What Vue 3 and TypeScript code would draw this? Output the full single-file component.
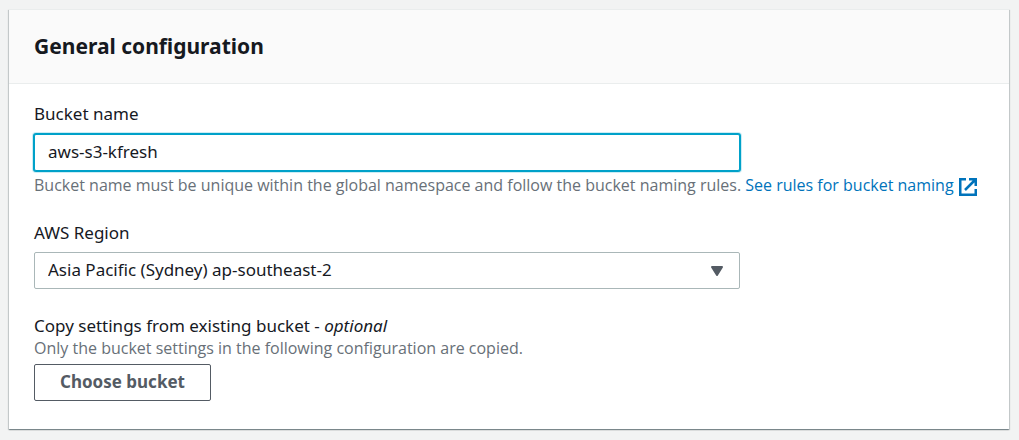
<script setup lang="ts">
import { ref } from 'vue'

interface Region {
  code: string
  label: string
}

const regions: Region[] = [
  { code: 'ap-southeast-2', label: 'Asia Pacific (Sydney) ap-southeast-2' },
]

const bucketName = ref<string>('aws-s3-kfresh')
const region = ref<string>('ap-southeast-2')
</script>

<template>
  <main class="page">
    <section class="panel" aria-labelledby="panel-title">
      <header class="panel-header">
        <h2 id="panel-title">General configuration</h2>
      </header>

      <form class="panel-body" @submit.prevent>
        <div class="field">
          <label class="label" for="bucket-name">Bucket name</label>
          <input id="bucket-name" v-model="bucketName" class="control input" type="text" aria-describedby="bucket-hint" />
          <p id="bucket-hint" class="hint">
            Bucket name must be unique within the global namespace and follow the bucket naming rules.
            <a class="link" href="#">See rules for bucket naming<svg class="external" viewBox="0 0 18 18" aria-hidden="true">
              <path d="M7 1.25H1.25V16.75H16.75V11" />
              <path d="M10 1.25H16.75V8M16.5 1.5L6 12" />
            </svg></a>
          </p>
        </div>

        <div class="field">
          <label class="label" for="region">AWS Region</label>
          <div class="select-wrap">
            <select id="region" v-model="region" class="control select">
              <option v-for="r in regions" :key="r.code" :value="r.code">{{ r.label }}</option>
            </select>
            <svg class="caret" viewBox="0 0 14 12" aria-hidden="true">
              <path d="M2 2H12L7 10Z" />
            </svg>
          </div>
        </div>

        <div class="field">
          <div id="copy-label" class="label">Copy settings from existing bucket - <em>optional</em></div>
          <p id="copy-hint" class="hint">Only the bucket settings in the following configuration are copied.</p>
          <button class="button" type="button" aria-describedby="copy-label copy-hint">Choose bucket</button>
        </div>
      </form>
    </section>
  </main>
</template>

<style>
body {
  background: #f2f3f3;
}
</style>

<style scoped>
.page {
  padding: 9px 10px 10px 9px;
  color: #16191f;
  font-family: "Noto Sans", "Open Sans", sans-serif;
  font-size: 17px;
  line-height: 22px;
}

.panel {
  background: #fff;
  border-top: 1px solid #eaeded;
  box-shadow: 0 1px 1px 0 rgba(0, 28, 36, 0.3), 1px 1px 1px 0 rgba(0, 28, 36, 0.15), -1px 1px 1px 0 rgba(0, 28, 36, 0.15);
}

.panel-header {
  padding: 20px 25px 21px;
  background: #fafafa;
  border-bottom: 1px solid #eaeded;
}

h2 {
  margin: 0;
  font-size: 21px;
  line-height: 32px;
  font-weight: 700;
}

.panel-body {
  display: flex;
  flex-direction: column;
  gap: 26px;
  padding: 19px 25px 28px;
}

.field {
  display: flex;
  flex-direction: column;
  align-items: flex-start;
}

.label {
  display: block;
}

.control {
  box-sizing: border-box;
  width: 100%;
  height: 37px;
  margin: 0;
  padding: 0 13px 2px;
  border: 1px solid #aab7b8;
  border-radius: 2px;
  background: #fff;
  color: #16191f;
  font: inherit;
}

.input {
  max-width: 706px;
  margin-top: 9px;
  border-color: #00a1c9;
  outline: none;
  box-shadow: 0 0 0 1px #00a1c9, 0 0 0 2px rgba(0, 161, 201, 0.2);
}

.select-wrap {
  position: relative;
  width: 100%;
  max-width: 706px;
  margin-top: 8px;
}

.select {
  display: block;
  appearance: none;
}

.caret {
  position: absolute;
  top: 13px;
  right: 16px;
  width: 14px;
  height: 12px;
  pointer-events: none;
  fill: #545b64;
  stroke: #545b64;
  stroke-width: 2;
  stroke-linejoin: round;
}

.hint {
  margin: 0;
  color: #687078;
  font-family: "Open Sans", "Noto Sans", sans-serif;
  font-size: 16px;
  line-height: 22px;
}

.input + .hint {
  margin-top: 3px;
}

.link {
  color: #0073bb;
  text-decoration: none;
}

.external {
  width: 18px;
  height: 18px;
  margin-left: 5px;
  vertical-align: -5px;
  fill: none;
  stroke: #0073bb;
  stroke-width: 2.5;
}

.button {
  height: 37px;
  margin-top: 5px;
  padding: 0 25px 1px;
  border: 1px solid #545b64;
  border-radius: 2px;
  background: #fff;
  color: #545b64;
  font: inherit;
  font-weight: 700;
}
</style>
